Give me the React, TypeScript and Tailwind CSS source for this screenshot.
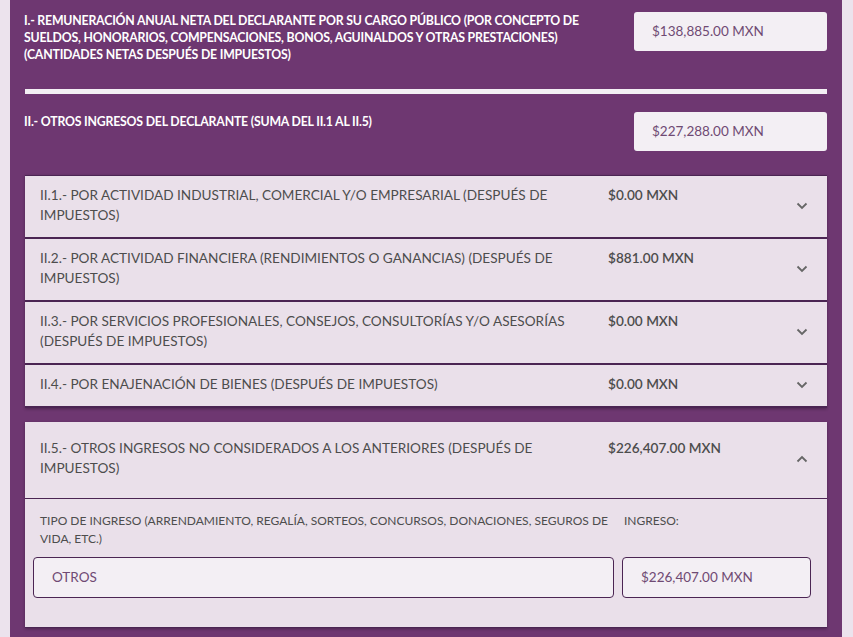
import React from "react";

interface Item {
    label: string;
    amount: string;
}

const ITEMS: Item[] = [
    {
        label: "II.1.- POR ACTIVIDAD INDUSTRIAL, COMERCIAL Y/O EMPRESARIAL (DESPUÉS DE IMPUESTOS)",
        amount: "$0.00 MXN",
    },
    {
        label: "II.2.- POR ACTIVIDAD FINANCIERA (RENDIMIENTOS O GANANCIAS) (DESPUÉS DE IMPUESTOS)",
        amount: "$881.00 MXN",
    },
    {
        label: "II.3.- POR SERVICIOS PROFESIONALES, CONSEJOS, CONSULTORÍAS Y/O ASESORÍAS (DESPUÉS DE IMPUESTOS)",
        amount: "$0.00 MXN",
    },
    {
        label: "II.4.- POR ENAJENACIÓN DE BIENES (DESPUÉS DE IMPUESTOS)",
        amount: "$0.00 MXN",
    },
];

function Chevron({ up = false }: { up?: boolean }) {
    return (
        <svg width="12" height="8" viewBox="0 0 12 8" className={up ? "rotate-180" : ""}>
            <path d="M1.5 1.5 L6 6 L10.5 1.5" fill="none" stroke="#666" strokeWidth="1.8" />
        </svg>
    );
}

function AmountBox({ value }: { value: string }) {
    return (
        <div className="w-[193px] h-[39px] shrink-0 rounded-[3px] bg-[#f3eff4] pl-[18px] flex items-center text-[13.5px] text-[#6f4a73]">
            {value}
        </div>
    );
}

export default function App() {
    return (
        <div className="min-h-screen bg-[#ece3ed] font-['Lato','Open_Sans',sans-serif]">
            <div className="mx-[10px] w-[832px] bg-[#6e3771] px-[15px] pt-[12px] pb-[10px]">
                {/* I. remuneración */}
                <div className="flex justify-between">
                    <p className="w-[565px] text-[12.3px] leading-[17px] font-bold text-white tracking-[-0.2px] -ml-[1px]">
                        I.- REMUNERACIÓN ANUAL NETA DEL DECLARANTE POR SU CARGO PÚBLICO (POR CONCEPTO DE SUELDOS, HONORARIOS, COMPENSACIONES, BONOS, AGUINALDOS Y OTRAS PRESTACIONES) (CANTIDADES NETAS DESPUÉS DE IMPUESTOS)
                    </p>
                    <AmountBox value="$138,885.00 MXN" />
                </div>
                <div className="mt-[26px] h-[5px] bg-[#f3eff4]" />

                {/* II. otros ingresos */}
                <div className="mt-[18px] flex justify-between">
                    <p className="pt-[1px] text-[12.3px] leading-[17px] font-bold text-white tracking-[-0.2px] -ml-[1px]">
                        II.- OTROS INGRESOS DEL DECLARANTE (SUMA DEL II.1 AL II.5)
                    </p>
                    <AmountBox value="$227,288.00 MXN" />
                </div>

                <div className="mt-[24px] border-t border-[#4b2553] shadow-[0_1px_3px_rgba(0,0,0,0.3)]">
                    {ITEMS.map((item, i) => (
                        <div key={i} className="flex items-start bg-[#eae0ea] border-b-2 border-[#4b2553] pl-[15px] pt-[9px] pb-[12px]">
                            <p className="w-[553px] text-[13.6px] leading-[20px] text-[#4d4d4d]">{item.label}</p>
                            <p className="ml-[15px] flex-1 text-[13.6px] leading-[20px] font-semibold text-[#4d4d4d]">{item.amount}</p>
                            <div className="w-[50px] self-center flex justify-center pt-[2px]">
                                <Chevron />
                            </div>
                        </div>
                    ))}
                </div>

                {/* II.5 expanded */}
                <div className="mt-[14px] bg-[#eae0ea] shadow-[0_1px_3px_rgba(0,0,0,0.3)]">
                    <div className="flex items-start border-b border-[#4b2553] pl-[15px] pt-[16px] pb-[20px]">
                        <p className="w-[553px] text-[13.6px] leading-[20px] text-[#4d4d4d]">
                            II.5.- OTROS INGRESOS NO CONSIDERADOS A LOS ANTERIORES (DESPUÉS DE IMPUESTOS)
                        </p>
                        <p className="ml-[15px] flex-1 text-[13.6px] leading-[20px] font-semibold text-[#4d4d4d]">$226,407.00 MXN</p>
                        <div className="w-[50px] self-center flex justify-center pt-[2px]">
                            <Chevron up />
                        </div>
                    </div>
                    <div className="grid grid-cols-[581px_189px] gap-x-[8px] pl-[8px] pr-[15px] pt-[13px] pb-[29px] border-b border-[#4b2553]">
                        <p className="pl-[7px] pr-[4px] text-[12px] leading-[18px] text-[#4d4d4d]">
                            TIPO DE INGRESO (ARRENDAMIENTO, REGALÍA, SORTEOS, CONCURSOS, DONACIONES, SEGUROS DE VIDA, ETC.)
                        </p>
                        <p className="pl-[2px] text-[12px] leading-[18px] text-[#4d4d4d]">INGRESO:</p>
                        <div className="mt-[9px] h-[41px] rounded-[4px] border border-[#4b2553] bg-[#f3eff4] pl-[18px] flex items-center text-[13.5px] text-[#6f4a73]">
                            OTROS
                        </div>
                        <div className="mt-[9px] h-[41px] rounded-[4px] border border-[#4b2553] bg-[#f3eff4] pl-[18px] flex items-center text-[13.5px] text-[#6f4a73]">
                            $226,407.00 MXN
                        </div>
                    </div>
                </div>
            </div>
        </div>
    );
}
